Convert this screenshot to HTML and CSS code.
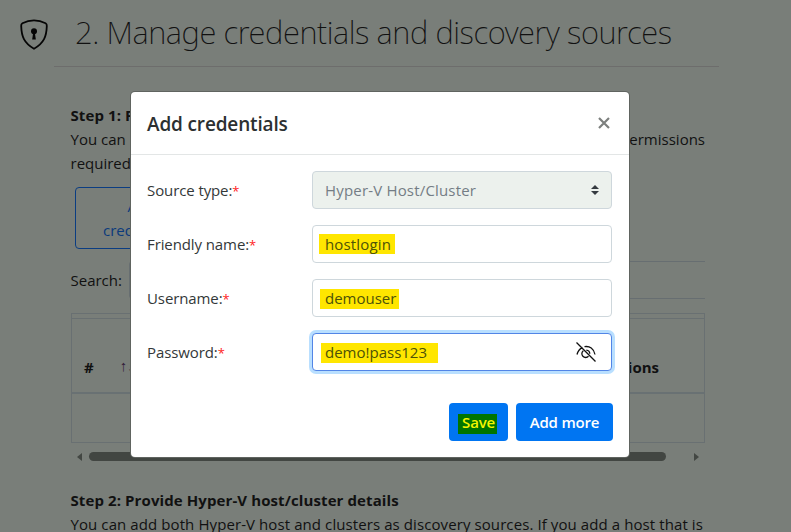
FILE: index.html
```html
<!DOCTYPE html>
<html lang="en">
<head>
<meta charset="utf-8">
<title>Manage credentials and discovery sources</title>
<link rel="stylesheet" href="styles.css">
</head>
<body>
<main class="page">
  <header class="page-head">
    <svg class="shield" viewBox="0 0 28 32" fill="none" stroke="#050505" stroke-width="1.8" stroke-linejoin="round"><path d="M14 1.3C10.5 1.3 6 2.3 2.4 4.2C1.2 4.8 1.1 5.7 1.2 7C1.5 17.500 4 24 14 29.800C24 24 26.500 17.500 26.800 7C26.900 5.700 26.800 4.800 25.600 4.200C22 2.300 17.500 1.300 14 1.300Z"/><circle cx="14" cy="12.300" r="3" fill="#050505" stroke="none"/><path d="M13.200 13h1.600l1 7.500h-3.600z" fill="#050505" stroke="none"/></svg>
    <h1>2. Manage credentials and discovery sources</h1>
  </header>
  <hr class="rule">
  <section class="content">
    <h2>Step 1: Provide</h2>
    <div class="intro">
      <span>You can</span><span class="intro-end">permissions</span>
    </div>
    <div class="intro">required</div>
    <button class="outline-btn">Add credentials</button>
    <div class="search"><label>Search:</label><div class="search-box"></div></div>
    <div class="table">
      <div class="table-gap"></div>
      <div class="table-head"><span class="hash">#</span><span class="sort">↑↓</span><span class="actions">Actions</span></div>
      <div class="table-row"></div>
    </div>
    <div class="scroll"><i class="left"></i><i class="thumb"></i><i class="right"></i></div>
    <h2 class="second">Step 2: Provide Hyper-V host/cluster details</h2>
    <div class="intro details">You can add both Hyper-V host and clusters as discovery sources. If you add a host that is</div>
  </section>
</main>
<div class="modal" role="dialog">
  <div class="modal-head">
    <span class="modal-title">Add credentials</span>
    <svg class="close" viewBox="0 0 12 12" stroke="#7d807e" stroke-width="2.200"><path d="M1 1L11 11M11 1L1 11"/></svg>
  </div>
  <div class="modal-body">
    <div class="row"><label>Source type:<b>*</b></label><div class="field disabled"><span class="t-source">Hyper-V Host/Cluster</span>
      <svg class="caret" viewBox="0 0 8 10" fill="#343a40"><path d="M4 0L8 4H0zM0 6H8L4 10z"/></svg></div></div>
    <div class="row"><label>Friendly name:<b>*</b></label><div class="field"><mark class="m-host">hostlogin</mark></div></div>
    <div class="row"><label>Username:<b>*</b></label><div class="field"><mark class="m-user">demouser</mark></div></div>
    <div class="row"><label>Password:<b>*</b></label><div class="field focus"><mark class="m-pass">demo!pass123</mark>
      <svg class="eye" viewBox="0 0 20 20" fill="none" stroke="#111" stroke-width="1.300"><path d="M.5 .5L19.500 19.500M1 12.500C2 8.500 4 6.500 6.500 5.300M8.500 4.700C13.500 3.700 18 6.500 19 12.500M7.300 8.700A3.800 3.800 0 1 0 12.500 14.200M10.300 8.200A3.800 3.800 0 0 1 13.800 11.800"/></svg></div></div>
  </div>
  <div class="modal-foot"><button class="primary save"><mark>Save</mark></button><button class="primary more">Add more</button></div>
</div>
</body>
</html>
```
FILE: styles.css
```css
* { box-sizing: border-box; }
body {
  margin: 0;
  height: 532px;
  overflow: hidden;
  background: #797e79;
  color: #111;
  font: 15px/24px "Open Sans", "Noto Sans", sans-serif;
}
h1, h2 { margin: 0; white-space: nowrap; }
button { font: inherit; }
.page { height: 532px; overflow: hidden; }
.page-head { display: flex; height: 66px; padding: 0 0 0 20px; align-items: flex-start; }
.shield { width: 28px; height: 32px; margin-top: 19px; flex: none; }
h1 { margin-left: 27px; font-family: "Noto Sans", "Open Sans", sans-serif; font-size: 31px; font-weight: 200; line-height: 64px; letter-spacing: -0.43px; color: #111; }
.rule { width: 665px; height: 1px; margin: 0 0 0 54px; border: 0; background: #6d6d6c; }
.content { width: 634.5px; margin: 36px 0 0 70.5px; }
h2 { font-size: 15px; line-height: 24px; font-weight: 700; letter-spacing: 0.1px; }
.intro { display: flex; justify-content: space-between; height: 24px; white-space: nowrap; }
.details { letter-spacing: 0.09px; }
.outline-btn {
  display: block;
  width: 133px;
  height: 62px;
  margin: 12px 0 0 4.5px;
  padding: 6px 20px;
  border: 1px solid #0b3d82;
  border-radius: 4px;
  background: transparent;
  color: #0b3a7c;
}
.search { display: flex; height: 38px; margin-top: 12px; align-items: center; gap: 7px; }
.search-box { flex: 1; height: 38px; border: 1px solid #676e71; border-right: 0; border-radius: 4px 0 0 4px; }
.table { height: 130px; margin: 14px 0 0 0.5px; border: 1px solid #697072; }
.table-gap { height: 5px; border-bottom: 1px solid #697072; }
.table-head { display: flex; height: 75px; padding: 36px 45px 0 12px; border-bottom: 2px solid #697173; font-weight: 700; }
.sort { margin-left: 26px; font-weight: 400; color: #301b38; line-height: 20px; }
.actions { margin-left: auto; }
.scroll { display: flex; height: 9px; margin-top: 9px; padding-left: 6.5px; align-items: center; }
.scroll .left { border: 4px solid transparent; border-right: 5px solid #434743; border-left: 0; }
.scroll .thumb { width: 577px; height: 9px; margin-left: 7px; border-radius: 5px; background: #424642; }
.scroll .right { margin-left: 28px; border: 4px solid transparent; border-left: 5px solid #434743; border-right: 0; }
.second { margin-top: 27px; }

.modal {
  position: absolute;
  left: 131px;
  top: 92px;
  width: 498px;
  height: 365px;
  border-radius: 4px;
  background: #fff;
  box-shadow: 0 0 0 1px #606460;
  color: #333839;
}
.modal-head { display: flex; height: 63px; padding: 0 19px 0 16px; align-items: center; justify-content: space-between; border-bottom: 1px solid #e3e6e6; }
.modal-title { margin-top: 2px; font-size: 19px; font-weight: 600; letter-spacing: -0.15px; color: #2c3031; }
.close { width: 12px; height: 12px; }
.modal-body { display: flex; flex-direction: column; gap: 16px; padding: 16px 17px 0 16px; }
.row { display: flex; height: 38px; align-items: center; }
.row label { width: 165px; letter-spacing: -0.1px; }
.row label b { color: #f22; font-size: 13px; font-weight: 400; }
.field { display: flex; width: 300px; height: 38px; padding: 0 12px; align-items: center; border: 1px solid #ced7dc; border-radius: 4px; background: #fff; }
.disabled { background: #ecf1ed; color: #747d85; }
.t-source { letter-spacing: 0.18px; }
.caret { width: 8px; height: 10px; margin-left: auto; }
.focus { border-color: #5285e6; box-shadow: 0 0 0 3px #b9dfff; }
.eye { width: 20px; height: 20px; margin: 0 3px 0 auto; }
mark { height: 20px; line-height: 20px; background: #ffe600; color: #4d5208; white-space: nowrap; }
.m-host { width: 76px; margin-left: -6px; padding-left: 6px; letter-spacing: 0.15px; }
.m-user { width: 79px; margin: 2px 0 0 -5px; padding-left: 5px; line-height: 18px; }
.m-pass { width: 117px; margin: 2px 0 0 -4px; padding-left: 4px; line-height: 18px; }
.modal-foot { display: flex; justify-content: flex-end; gap: 8px; margin-top: 32px; padding-right: 16px; }
.primary { height: 38px; padding: 0; border: 0; border-radius: 4px; background: #0075f2; color: #fff; font-weight: 600; letter-spacing: -0.2px; }
.save { width: 59px; }
.save mark { display: block; width: 39px; margin: 4px 0 0 9px; padding-left: 2px; background: #007500; color: #f5f500; line-height: 16px; }
.more { width: 97px; }
```
